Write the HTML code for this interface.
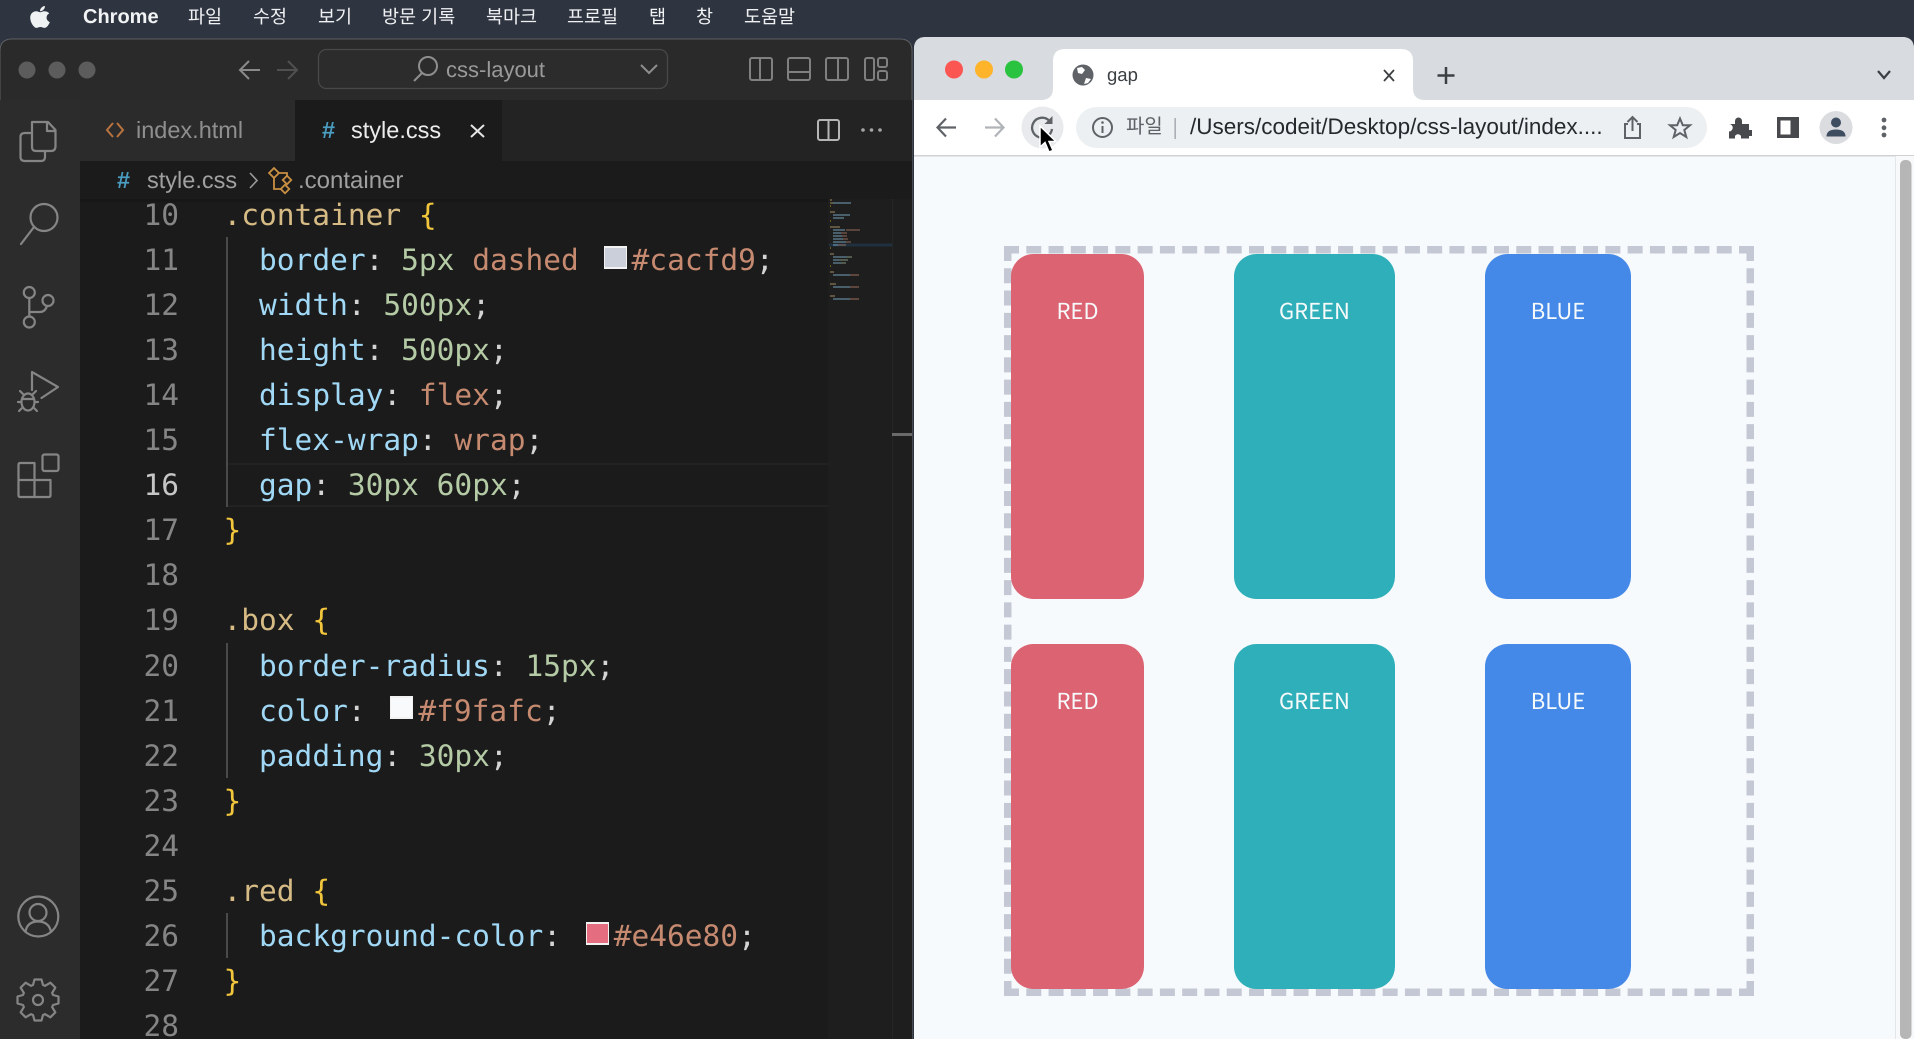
<!DOCTYPE html>
<html lang="ko"><head><meta charset="utf-8"><title>gap</title>
<style>
html,body{margin:0;padding:0;width:1914px;height:1039px;overflow:hidden;background:#2e3440}
body{position:relative;font-family:"Liberation Sans","Noto Sans CJK KR",sans-serif;text-rendering:geometricPrecision}
svg.l{position:absolute;left:0;top:0}
.t{position:absolute;white-space:pre;line-height:1}
.m{top:7px;font-size:18.5px;color:#f0f1f3;line-height:20px}
#ed{position:absolute;left:80px;top:199px;width:748px;height:840px;overflow:hidden;font-family:"DejaVu Sans Mono",monospace;font-size:29.5px}
.c,.n{position:absolute;white-space:pre;line-height:45px;height:45px;margin-top:1px}
.c{left:143.5px;color:#d4d4d4}
.n{left:39px;width:60px;text-align:right;color:#858585}
.s{color:#d6bb85}.b{color:#f2c63c}.p{color:#a0d8f5}.v{color:#b4cba6}.k{color:#c68a70}
.sw{display:inline-block;width:35px;height:10px}
.q{position:absolute;width:23px;height:23px;box-sizing:border-box;border:2px solid #f2f2f2;border-left-width:1px;border-right-width:1px}
.g{position:absolute;width:1.5px;background:#4a4a4a}
#dash{position:absolute;left:1003.5px;top:246px;width:500px;height:500px;box-sizing:border-box;border:5px dashed #c4c8d4;transform:scale(1.5);transform-origin:0 0}
.box{position:absolute;border-radius:22.5px;height:345px;color:#f6fafb;text-align:center;font:400 22px/26px "Noto Sans CJK KR","Liberation Sans",sans-serif;padding-top:43px;box-sizing:border-box}
.r{background:#dc6372}.gn{background:#2eafb9}.bl{background:#4589e8}
</style></head><body>
<svg class="l" width="1914" height="1039" viewBox="0 0 1914 1039">
<rect width="1914" height="1039" fill="#2e3440"/>
<!-- vscode window -->
<path d="M0 51Q0 39 12 39H900Q912 39 912 51V1039H0Z" fill="#2a2a2a" stroke="#5d5f63" stroke-width="1"/>
<rect x="0" y="100" width="80" height="939" fill="#2c2c2c"/>
<rect x="80" y="100" width="832" height="61" fill="#232323"/>
<rect x="80" y="100" width="215" height="61" fill="#2b2b2b"/>
<rect x="295" y="100" width="207" height="61" fill="#1b1b1b"/>
<rect x="80" y="161" width="832" height="878" fill="#1b1b1b"/>
<rect x="80" y="199" width="832" height="3" fill="#151515" opacity=".7"/>
<rect x="828" y="199" width="84" height="840" fill="#1e1e1e"/>
<rect x="892" y="199" width="1" height="840" fill="#262626"/>
<!-- title bar -->
<circle cx="27" cy="70" r="8.5" fill="#5c5c5c"/><circle cx="57" cy="70" r="8.5" fill="#5c5c5c"/><circle cx="87" cy="70" r="8.5" fill="#5c5c5c"/>
<g fill="none" stroke="#8a8a8a" stroke-width="2">
<path d="M260 70H240M249 61L240 70L249 79"/>
<path d="M277 70H297M288 61L297 70L288 79" stroke="#505050"/>
</g>
<rect x="318.5" y="49.5" width="349" height="39" rx="8" fill="#2c2c2c" stroke="#484848" stroke-width="1.3"/>
<g fill="none" stroke="#8e8e8e" stroke-width="2">
<circle cx="428" cy="66" r="9"/><path d="M422 73L414 81"/>
<path d="M641 65L649 73L657 65"/>
</g>
<g fill="none" stroke="#808080" stroke-width="2">
<rect x="750" y="58" width="22" height="22" rx="2"/><path d="M760 58V80"/>
<rect x="788" y="58" width="22" height="22" rx="2"/><path d="M788 72H810"/>
<rect x="826" y="58" width="22" height="22" rx="2"/><path d="M838 58V80"/>
<rect x="865" y="58" width="9" height="22" rx="2"/><rect x="878" y="58" width="9" height="9" rx="2"/><rect x="878" y="71" width="9" height="9" rx="2"/>
</g>
<!-- tab icons -->
<g fill="none" stroke-width="2">
<path d="M113 123L107 130L113 137M117 123L123 130L117 137" stroke="#b8733f"/>
<path d="M471 125L484 137M484 125L471 137" stroke="#e6e6e6"/>
<rect x="818" y="120" width="21" height="20" rx="2" stroke="#b5b5b5"/><path d="M828.500 120V140" stroke="#b5b5b5"/>
</g>
<g fill="#a5a5a5"><circle cx="863" cy="130" r="1.800"/><circle cx="871.500" cy="130" r="1.800"/><circle cx="880" cy="130" r="1.800"/></g>
<!-- breadcrumb icon -->
<g fill="none" stroke="#c98f42" stroke-width="1.800">
<rect x="270.500" y="169.500" width="7" height="7" transform="rotate(45 274 173)"/>
<rect x="284" y="177" width="6" height="6" transform="rotate(45 287 180)"/>
<rect x="282" y="186" width="6" height="6" transform="rotate(45 285 189)"/>
<path d="M278 173H287V176M274 178V189H281"/>
</g>
<path d="M250 173L257 180.500L250 188" fill="none" stroke="#9a9a9a" stroke-width="1.600"/>
<!-- activity bar icons -->
<g fill="none" stroke="#858585" stroke-width="2.200" stroke-linejoin="round" stroke-linecap="round">
<path d="M32 122H48L55.500 130V146Q55.500 151 51 151H36Q32 151 32 147ZM47 122V131H55.500"/>
<path d="M32 133H25Q20.500 133 20.500 137V157Q20.500 161 25 161H41Q45 161 45 157V151"/>
<circle cx="44" cy="217.500" r="13.500"/><path d="M34 227L21 244"/>
<circle cx="29.300" cy="292.500" r="5.500"/><circle cx="29.300" cy="322" r="5.500"/><circle cx="48" cy="300.500" r="5.500"/>
<path d="M29.300 298V316.500M29.300 312H40Q45 312 47 306"/>
<path d="M32 390V372L58 387L41.500 398"/>
<ellipse cx="28" cy="402" rx="6.500" ry="8.500"/><path d="M22 399H34M23 394L20 391M33 394L36 391M21 402H18M35 402H38M22 408L19 411M34 408L37 411"/>
<rect x="42.500" y="454.500" width="16" height="16.500" rx="2"/>
<path d="M20 463H34.500V497H20Q18.500 497 18.500 495V465Q18.500 463 20 463ZM18.500 480H50.500M34.500 480H50.500V495Q50.500 497 49 497H34.500"/>
<circle cx="38.300" cy="916.500" r="20"/><circle cx="38" cy="912.500" r="8.500"/><path d="M25.500 932Q27 921.500 38 921.500Q49 921.500 51 932"/>
<path transform="translate(38 1000)" d="M-5 -15L-3.500 -20.500H3.500L5 -15L7.070 -14.140L12.370 -17.320L17.320 -12.370L14.140 -7.070L15 -5L20.500 -3.500V3.500L15 5L14.140 7.070L17.320 12.370L12.370 17.320L7.070 14.140L5 15L3.500 20.500H-3.500L-5 15L-7.070 14.140L-12.370 17.320L-17.320 12.370L-14.140 7.070L-15 5L-20.500 3.500V-3.500L-15 -5L-14.140 -7.070L-17.320 -12.370L-12.370 -17.320L-7.070 -14.140Z"/>
<circle cx="38" cy="1000" r="5"/>
</g>
<!-- apple -->
<svg x="30" y="5" width="20" height="24" viewBox="0 12 384 490" preserveAspectRatio="none"><path fill="#f0f1f3" d="M318.700 268.700c-.2-36.700 16.400-64.400 50-84.800-18.800-26.900-47.200-41.700-84.700-44.600-35.500-2.800-74.300 20.700-88.500 20.700-15 0-49.400-19.700-76.400-19.700C63.300 141.200 4 184.800 4 273.500q0 39.300 14.400 81.200c12.800 36.700 59 126.700 107.200 125.200 25.200-.6 43-17.900 75.800-17.900 31.800 0 48.300 17.900 76.400 17.900 48.600-.7 90.400-82.500 102.600-119.300-65.200-30.700-61.700-90-61.700-91.900zm-56.600-164.200c27.300-32.400 24.800-61.900 24-72.500-24.100 1.400-52 16.400-67.900 34.900-17.500 19.800-27.800 44.300-25.600 71.900 26.100 2 49.900-11.400 69.500-34.300z"/></svg>
<!-- chrome window -->
<path d="M914 49Q914 37 926 37H1902Q1914 37 1914 49V1039H914Z" fill="#f7fafc"/>
<path d="M914 49Q914 37 926 37H1902Q1914 37 1914 49V100H914Z" fill="#d8dbdf"/>
<rect x="914" y="100" width="1000" height="55" fill="#fff"/>
<rect x="914" y="155" width="1000" height="1.500" fill="#d0d1d3"/>
<path d="M1041 100Q1053 100 1053 88V61Q1053 49 1065 49H1401Q1413 49 1413 61V88Q1413 100 1425 100Z" fill="#fff"/>
<circle cx="954" cy="69.500" r="9" fill="#fc5652"/><circle cx="984" cy="69.500" r="9" fill="#fdb32a"/><circle cx="1014" cy="69.500" r="9" fill="#2ac33f"/>
<!-- globe -->
<circle cx="1083" cy="75" r="10.500" fill="#5f6368"/>
<path d="M1077 68L1082 67L1085 70L1082 74L1078 73ZM1086 78L1091 79L1088 83L1084 84Z" fill="#fff"/>
<g fill="none" stroke="#3c4043" stroke-width="2.200">
<path d="M1384 70L1394 81M1394 70L1384 81" stroke-width="1.800"/>
<path d="M1446 67V84M1437.500 75.500H1454.500" stroke-width="2.500"/>
<path d="M1878 71L1884 78L1890 71"/>
</g>
<g fill="none" stroke-width="2.200">
<path d="M956 127.500H938M946 118.500L937.500 127.500L946 136.500" stroke="#5f6368"/>
<path d="M985 127.500H1003M995 118.500L1003.500 127.500L995 136.500" stroke="#b0b3b7"/>
</g>
<circle cx="1042.500" cy="127.500" r="21" fill="#e8eaed"/>
<path d="M1049 120.500A10 10 0 1 0 1052 129" fill="none" stroke="#5f6368" stroke-width="2.300"/>
<path d="M1052.500 116V124H1044.500Z" fill="#5f6368"/>
<rect x="1076" y="107" width="631" height="41" rx="20.500" fill="#edf0f2"/>
<circle cx="1102.500" cy="127.500" r="9.500" fill="none" stroke="#5f6368" stroke-width="2"/>
<path d="M1102.500 126V133" stroke="#5f6368" stroke-width="2"/><circle cx="1102.500" cy="122.500" r="1.300" fill="#5f6368"/>
<rect x="1174.500" y="118" width="1.300" height="21" fill="#9aa0a6"/>
<g fill="none" stroke="#5f6368" stroke-width="2">
<path d="M1628 124H1625V138H1640V124H1637M1632.500 131V117.500M1627.500 122L1632.500 117L1637.500 122"/>
<path d="M1680 118.500L1682.800 125.300H1690L1684.300 130L1686.300 137L1680 133L1673.700 137L1675.700 130L1670 125.300H1677.200Z"/>
</g>
<path d="M1729 124H1735V121A3.500 3.500 0 0 1 1742 121V124H1749V130H1752V136H1749V138.500H1741V136A3.500 3.500 0 0 0 1735 136V138.500H1729V131.500A3.500 3.500 0 0 0 1729 124Z" fill="#47494c"/>
<rect x="1777" y="117" width="22" height="21" fill="#47494c"/><rect x="1780.500" y="120.500" width="10" height="14" fill="#fff"/>
<circle cx="1836" cy="127.500" r="16.500" fill="#dadce0"/>
<circle cx="1836" cy="122.500" r="5" fill="#3f4d60"/><path d="M1826.500 136.500Q1826.500 129.500 1836 129.500Q1845.500 129.500 1845.500 136.500Z" fill="#3f4d60"/>
<g fill="#5f6368"><circle cx="1884" cy="120" r="2.400"/><circle cx="1884" cy="127.800" r="2.400"/><circle cx="1884" cy="135" r="2.400"/></g>
<!-- scrollbar -->
<rect x="1895" y="156" width="19" height="883" fill="#f8f9fa"/><rect x="1895" y="156" width="1" height="883" fill="#e5e6e7"/>
<rect x="1900" y="160" width="11.500" height="879" rx="5" fill="#b6b6b6"/>
</svg>
<!-- menu bar -->
<div class="t" style="left:83px;top:6px;font-size:20px;line-height:22px;font-weight:700;color:#f2f3f5">Chrome</div>
<div class="t m" style="left:188px">파일</div><div class="t m" style="left:253px">수정</div><div class="t m" style="left:318px">보기</div><div class="t m" style="left:382px">방문 기록</div><div class="t m" style="left:486px">북마크</div><div class="t m" style="left:567px">프로필</div><div class="t m" style="left:649px">탭</div><div class="t m" style="left:696px">창</div><div class="t m" style="left:744px">도움말</div>
<!-- vscode text -->
<div class="t" style="left:446px;top:58px;font-size:22px;line-height:24px;color:#9a9a9a">css-layout</div>
<div class="t" style="left:136px;top:118px;font-size:23.5px;line-height:25px;color:#8f8f8f">index.html</div>
<div class="t" style="left:322px;top:118px;font-size:23.5px;line-height:25px;font-weight:700;color:#4a9cc0">#</div>
<div class="t" style="left:351px;top:118px;font-size:23.5px;line-height:25px;color:#ececec">style.css</div>
<div class="t" style="left:117px;top:168px;font-size:23.5px;line-height:25px;font-weight:700;color:#4a9cc0">#</div>
<div class="t" style="left:147px;top:168px;font-size:23.5px;line-height:25px;color:#a0a0a0">style.css</div>
<div class="t" style="left:298px;top:168px;font-size:24px;line-height:25px;color:#a0a0a0">.container</div>
<!-- editor -->
<div id="ed">
<div style="position:absolute;left:146px;top:264px;width:602px;height:44px;border-top:2px solid #222;border-bottom:2px solid #222;box-sizing:border-box"></div>
<div class="g" style="left:146px;top:38px;height:270px"></div>
<div class="g" style="left:146px;top:444px;height:135px"></div>
<div class="g" style="left:146px;top:714px;height:45px"></div>
<div class="n" style="top:-7.500px">10</div><div class="c" style="top:-7.500px"><span class="s">.container</span> <span class="b">{</span></div>
<div class="n" style="top:37.600px">11</div><div class="c" style="top:37.600px">  <span class="p">border</span>: <span class="v">5px</span> <span class="k">dashed</span> <span class="sw"></span><span class="k">#cacfd9</span>;</div>
<div class="q" style="left:524px;top:47px;background:#cacfd9"></div>
<div class="n" style="top:82.700px">12</div><div class="c" style="top:82.700px">  <span class="p">width</span>: <span class="v">500px</span>;</div>
<div class="n" style="top:127.800px">13</div><div class="c" style="top:127.800px">  <span class="p">height</span>: <span class="v">500px</span>;</div>
<div class="n" style="top:172.900px">14</div><div class="c" style="top:172.900px">  <span class="p">display</span>: <span class="k">flex</span>;</div>
<div class="n" style="top:218px">15</div><div class="c" style="top:218px">  <span class="p">flex-wrap</span>: <span class="k">wrap</span>;</div>
<div class="n" style="top:263.100px;color:#c6c6c6">16</div><div class="c" style="top:263.100px">  <span class="p">gap</span>: <span class="v">30px</span> <span class="v">60px</span>;</div>
<div class="n" style="top:308.200px">17</div><div class="c" style="top:308.200px"><span class="b">}</span></div>
<div class="n" style="top:353.300px">18</div>
<div class="n" style="top:398.400px">19</div><div class="c" style="top:398.400px"><span class="s">.box</span> <span class="b">{</span></div>
<div class="n" style="top:443.500px">20</div><div class="c" style="top:443.500px">  <span class="p">border-radius</span>: <span class="v">15px</span>;</div>
<div class="n" style="top:488.600px">21</div><div class="c" style="top:488.600px">  <span class="p">color</span>: <span class="sw"></span><span class="k">#f9fafc</span>;</div>
<div class="q" style="left:310px;top:497px;background:#f9fafc"></div>
<div class="n" style="top:533.700px">22</div><div class="c" style="top:533.700px">  <span class="p">padding</span>: <span class="v">30px</span>;</div>
<div class="n" style="top:578.800px">23</div><div class="c" style="top:578.800px"><span class="b">}</span></div>
<div class="n" style="top:623.900px">24</div>
<div class="n" style="top:669px">25</div><div class="c" style="top:669px"><span class="s">.red</span> <span class="b">{</span></div>
<div class="n" style="top:714.100px">26</div><div class="c" style="top:714.100px">  <span class="p">background-color</span>: <span class="sw"></span><span class="k">#e46e80</span>;</div>
<div class="q" style="left:506px;top:723px;background:#e46e80"></div>
<div class="n" style="top:759.200px">27</div><div class="c" style="top:759.200px"><span class="b">}</span></div>
<div class="n" style="top:804.300px">28</div>
</div>
<!-- minimap -->
<svg class="l" width="1914" height="1039" viewBox="0 0 1914 1039" style="pointer-events:none">
<rect x="829" y="243.500" width="63" height="3" fill="#20303f"/>
<g stroke-width="1.300" opacity=".55">
<path d="M830 200h2M830 203h4" stroke="#d7ba7d"/><path d="M833 203h18" stroke="#9cdcfe"/><path d="M830 206h1" stroke="#ffd700"/>
<path d="M830 212h5" stroke="#d7ba7d"/><path d="M833 215h17M833 218h11" stroke="#9cdcfe"/><path d="M830 221h1" stroke="#ffd700"/>
<path d="M830 227h10" stroke="#d7ba7d"/><path d="M833 230h12M833 233h8M833 236h9M833 239h10M833 242h13M833 245h5" stroke="#9cdcfe"/><path d="M846 230h14M841 233h6M842 236h5M843 239h5M846 242h5M838 245h8" stroke="#ce9178"/><path d="M830 248h1" stroke="#ffd700"/>
<path d="M830 254h4" stroke="#d7ba7d"/><path d="M833 257h14M833 260h6M833 263h8" stroke="#9cdcfe"/><path d="M847 257h5M839 260h9M841 263h5" stroke="#b5cea8"/><path d="M830 266h1" stroke="#ffd700"/>
<path d="M830 272h4" stroke="#d7ba7d"/><path d="M833 275h17" stroke="#9cdcfe"/><path d="M850 275h9" stroke="#ce9178"/>
<path d="M830 284h6" stroke="#d7ba7d"/><path d="M833 287h17" stroke="#9cdcfe"/><path d="M850 287h9" stroke="#ce9178"/>
<path d="M830 296h5" stroke="#d7ba7d"/><path d="M833 299h17" stroke="#9cdcfe"/><path d="M850 299h9" stroke="#ce9178"/>
</g>
<rect x="892" y="433" width="20" height="3" fill="#6a6a6a"/>
</svg>
<!-- chrome text -->
<div class="t" style="left:1107px;top:64px;font-size:18.500px;line-height:22px;color:#3c4043">gap</div>
<div class="t" style="left:1126px;top:116px;font-size:20px;line-height:22px;color:#5f6368">파일</div>
<div class="t" style="left:1190px;top:114px;font-size:22.500px;line-height:26px;color:#25282c">/Users/codeit/Desktop/css-layout/index....</div>
<!-- page -->
<div id="dash"></div>
<div class="box r" style="left:1011px;top:253.500px;width:133px">RED</div>
<div class="box gn" style="left:1234px;top:253.500px;width:161px">GREEN</div>
<div class="box bl" style="left:1485px;top:253.500px;width:146px">BLUE</div>
<div class="box r" style="left:1011px;top:643.500px;width:133px">RED</div>
<div class="box gn" style="left:1234px;top:643.500px;width:161px">GREEN</div>
<div class="box bl" style="left:1485px;top:643.500px;width:146px">BLUE</div>
<!-- cursor -->
<svg class="l" width="1914" height="1039" viewBox="0 0 1914 1039"><path d="M1040 126V147L1045 142.500L1049 152L1053 150.500L1049 141.500H1056Z" fill="#000" stroke="#fff" stroke-width="1.500"/></svg>
</body></html>
